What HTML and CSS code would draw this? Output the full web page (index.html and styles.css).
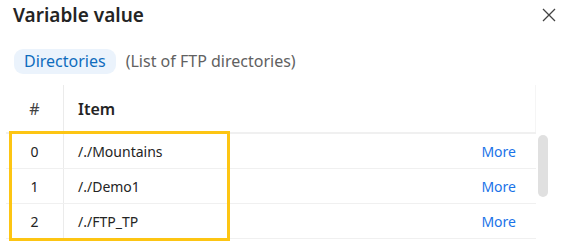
FILE: index.html
```html
<!DOCTYPE html>
<html lang="en">
<head>
<meta charset="utf-8">
<title>Variable value</title>
<link rel="stylesheet" href="styles.css">
</head>
<body>
<div class="dialog">
  <header class="head">
    <h1 class="title">Variable value</h1>
    <button class="close" aria-label="Close">
      <svg width="20" height="20" viewBox="0 0 20 20"><path d="M4 4 L16 16 M16 4 L4 16" stroke="#424242" stroke-width="1.3" fill="none"/></svg>
    </button>
  </header>
  <div class="meta">
    <span class="chip">Directories</span>
    <span class="desc">(List of FTP directories)</span>
  </div>
  <div class="table-wrap">
    <div class="table">
      <div class="row head-row">
        <div class="cell num">#</div>
        <div class="cell item">Item</div>
      </div>
      <div class="row">
        <div class="cell num">0</div>
        <div class="cell item">/./Mountains<a class="more" href="#">More</a></div>
      </div>
      <div class="row">
        <div class="cell num">1</div>
        <div class="cell item">/./Demo1<a class="more" href="#">More</a></div>
      </div>
      <div class="row">
        <div class="cell num">2</div>
        <div class="cell item">/./FTP_TP<a class="more" href="#">More</a></div>
      </div>
    </div>
    <div class="scroll"><div class="thumb"></div></div>
    <div class="highlight"></div>
  </div>
</div>
</body>
</html>
```
FILE: styles.css
```css
* { box-sizing: border-box; }
html, body { margin: 0; padding: 0; background: #fff; }
body {
  width: 565px;
  height: 248px;
  overflow: hidden;
  font-family: "Noto Sans", "Open Sans", sans-serif;
  color: #242424;
}
.dialog { padding-top: 1px; }
.head {
  display: flex;
  align-items: center;
  justify-content: space-between;
  padding: 0 6px 0 13px;
  height: 28px;
}
.title {
  margin: 0;
  font-size: 19px;
  line-height: 28px;
  font-weight: 600;
  color: #242424;
}
.close {
  border: 0;
  background: none;
  padding: 0;
  width: 20px;
  height: 20px;
  display: flex;
}
.meta {
  display: flex;
  align-items: center;
  gap: 10px;
  margin-top: 20px;
  padding-left: 14px;
}
.chip {
  background: #ebf3fc;
  color: #0f6cbd;
  font-size: 16px;
  line-height: 25px;
  height: 25px;
  padding: 0 10px;
  border-radius: 9px;
}
.desc {
  font-size: 16px;
  color: #616161;
  line-height: 25px;
}
.table-wrap {
  position: relative;
  display: flex;
  align-items: flex-start;
  margin-top: 11px;
  margin-left: 6px;
}
.table { width: 530px; }
.row {
  display: flex;
  height: 35px;
  border-bottom: 1px solid #f0f0f0;
  font-size: 14px;
}
.head-row {
  height: 49px;
  border-bottom: 2px solid #f0f0f0;
  font-size: 16px;
}
.cell {
  display: flex;
  align-items: center;
}
.num {
  width: 58px;
  justify-content: center;
}
.item {
  flex: 1;
  padding: 0 20px 0 14px;
}
.head-row .num { border-right: 1px solid #ebebeb; color: #424242; }
.head-row .item { border-right: 1px solid #f5f5f5; font-weight: 600; }
.row .num { border-right: 1px solid #ebebeb; }
.more {
  margin-left: auto;
  color: #1a73e8;
  text-decoration: none;
}
.scroll {
  width: 12px;
  padding-left: 2px;
  padding-top: 50px;
}
.thumb {
  width: 10px;
  height: 62px;
  background: #e0e0e0;
  border-radius: 5px;
}
.highlight {
  position: absolute;
  left: 3px;
  top: 46px;
  width: 221px;
  height: 110px;
  border: 3px solid #fdc513;
  pointer-events: none;
}
```
